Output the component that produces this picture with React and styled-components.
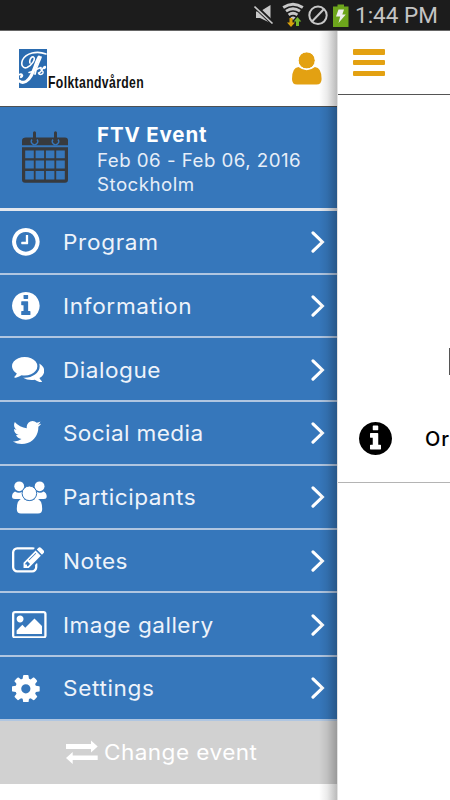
import React from 'react';
import styled, { createGlobalStyle } from 'styled-components';

const GlobalStyle = createGlobalStyle`
  * {
    box-sizing: border-box;
  }

  body {
    margin: 0;
    overflow: hidden;
    background: #fff;
    font-family: Inter, 'Liberation Sans', sans-serif;
  }
`;

const Screen = styled.div`
  display: flex;
  flex-direction: column;
  width: 450px;
  height: 800px;
  overflow: hidden;
`;

const StatusBar = styled.div`
  display: flex;
  align-items: center;
  justify-content: flex-end;
  flex: none;
  height: 31px;
  padding: 0 13px 1px 0;
  background: #1c1c1c;
  border-bottom: 1px solid #666;

  & svg {
    flex: none;
    margin-right: 5px;
  }
`;

const Clock = styled.span`
  width: 82px;
  font-family: Roboto, sans-serif;
  font-size: 22.5px;
  line-height: 28px;
  white-space: nowrap;
  color: #c4c4c4;
`;

const Body = styled.div`
  display: flex;
  flex: 1;
  min-height: 0;
`;

const Drawer = styled.aside`
  position: relative;
  display: flex;
  flex-direction: column;
  flex: none;
  width: 337px;
  background: #fff;

  &::after {
    content: '';
    position: absolute;
    top: 0;
    right: 0;
    bottom: 0;
    width: 18px;
    background: linear-gradient(to right, rgba(0, 0, 0, 0), rgba(0, 0, 0, 0.08) 45%, rgba(0, 0, 0, 0.27));
  }
`;

const DrawerHeader = styled.header`
  display: flex;
  align-items: flex-start;
  justify-content: space-between;
  flex: none;
  height: 76px;
  padding: 18px 15px 0 19px;
  border-bottom: 1px solid #4d5052;
`;

const Logo = styled.div`
  display: flex;
  align-items: flex-end;
`;

const LogoText = styled.span`
  width: 97px;
  margin: 0 0 -3px 1px;
  font-family: 'Liberation Sans', sans-serif;
  font-size: 16.5px;
  font-weight: 700;
  line-height: 17px;
  letter-spacing: 0.5px;
  white-space: nowrap;
  color: #111;
  transform: scaleX(0.74);
  transform-origin: left;
`;

const UserIcon = styled.svg`
  margin-top: 3px;
`;

const EventCard = styled.section`
  display: flex;
  flex: none;
  height: 103.75px;
  padding: 14px 0 0 22px;
  color: #fff;
  background: #3677bb;
  border-bottom: 3px solid #e3e7ee;
`;

const CalendarBox = styled.div`
  padding-top: 10px;
`;

const EventInfo = styled.div`
  margin-left: 28px;
`;

const EventTitle = styled.h1`
  margin: 0;
  font-size: 20.5px;
  font-weight: 700;
  line-height: 28px;
  letter-spacing: 0.85px;
`;

const EventLine = styled.div`
  font-size: 18px;
  line-height: 24px;
  white-space: nowrap;
  color: #e6eef8;
  letter-spacing: 0.45px;
  transform: scaleX(1.04);
  transform-origin: left;
`;

const MenuItem = styled.div`
  display: flex;
  align-items: center;
  flex: none;
  height: 63.75px;
  padding: 1px 12px 0;
  color: #fff;
  background: #3677bb;
  border-bottom: 2px solid #b0c6e1;
`;

const IconBox = styled.span`
  display: flex;
  flex: none;
  width: 50.5px;
`;

const Label = styled.span`
  font-size: 21.5px;
  line-height: 28px;
  white-space: nowrap;
  color: #eef3fa;
  letter-spacing: ${({ $spacing }) => $spacing}px;
  transform: scaleX(1.05);
  transform-origin: left;
`;

const ChevronIcon = styled.svg`
  margin-left: auto;
`;

const ChangeEvent = styled.div`
  display: flex;
  align-items: center;
  flex: none;
  height: 63px;
  padding: 0 0 0 66px;
  background: #d1d1d1;

  & ${Label} {
    margin-left: 5.5px;
    color: #fff;
  }
`;

const Content = styled.main`
  flex: none;
  width: 113px;
  overflow: hidden;
  background: #fff;
  border-left: 1px solid #e2e2e2;
`;

const ContentHeader = styled.header`
  height: 64px;
  padding: 18px 0 0 15px;
  border-bottom: 1px solid #555;
`;

const Burger = styled.div`
  display: flex;
  flex-direction: column;
  justify-content: space-between;
  width: 32px;
  height: 27px;

  & span {
    height: 5.5px;
    border-radius: 1px;
    background: #e3a112;
  }
`;

const Hero = styled.div`
  display: flex;
  justify-content: flex-end;
  height: 299px;
  padding-top: 253px;

  & span {
    width: 1px;
    height: 27px;
    background: #555;
  }
`;

const ContentRow = styled.div`
  display: flex;
  align-items: center;
  height: 89px;
  padding-left: 21px;
  border-bottom: 1px solid #b4b4b4;

  & svg {
    flex: none;
  }

  & span {
    margin: 2px 0 0 33px;
    font-size: 20px;
    font-weight: 500;
    letter-spacing: 1px;
    white-space: nowrap;
    color: #000;
  }
`;

const infoPath =
  'M1152 1376v-160q0-14-9-23t-23-9h-96v-512q0-14-9-23t-23-9h-320q-14 0-23 9t-9 23v160q0 14 9 23t23 9h96v320h-96q-14 0-23 9t-9 23v160q0 14 9 23t23 9h448q14 0 23-9t9-23zm-128-896v-160q0-14-9-23t-23-9h-192q-14 0-23 9t-9 23v160q0 14 9 23t23 9h192q14 0 23-9t9-23zm640 416q0 209-103 385.5t-279.5 279.5-385.5 103-385.5-103-279.5-279.5-103-385.5 103-385.5 279.5-279.5 385.5-103 385.5 103 279.5 279.5 103 385.5z';

const icons = {
  clock: {
    box: [128, 128, 1536, 1536],
    d: 'M1024 544v448q0 14-9 23t-23 9h-320q-14 0-23-9t-9-23v-64q0-14 9-23t23-9h224v-352q0-14 9-23t23-9h64q14 0 23 9t9 23zm416 352q0-148-73-273t-198-198-273-73-273 73-198 198-73 273 73 273 198 198 273 73 273-73 198-198 73-273zm224 0q0 209-103 385.5t-279.5 279.5-385.5 103-385.5-103-279.5-279.5-103-385.5 103-385.5 279.5-279.5 385.5-103 385.5 103 279.5 279.5 103 385.5z',
  },
  info: { box: [128, 128, 1536, 1536], d: infoPath },
  comments: {
    box: [0, 256, 1792, 1408],
    d: 'M1408 768q0 139-94 257t-256.5 186.5-353.5 68.5q-86 0-176-16-124 88-278 128-36 9-86 16h-3q-11 0-20.5-8t-11.5-21q-1-3-1-6.5t.5-6.5 2-6l2.5-5 3.5-5.5 4-5 4.5-5 4-4.5q5-6 23-25t26-29.5 22.5-29 25-38.5 20.5-44q-124-72-195-177t-71-224q0-139 94-257t256.5-186.5 353.5-68.5 353.5 68.5 256.5 186.5 94 257zm384 256q0 120-71 224.5t-195 176.5q10 24 20.5 44t25 38.5 22.5 29 26 29.5 23 25q1 1 4 4.5t4.5 5 4 5 3.5 5.5l2.5 5 2 6 .5 6.5-1 6.5q-3 14-13 22t-22 7q-50-7-86-16-154-40-278-128-90 16-176 16-271 0-472-132 58 4 88 4 161 0 309-45t264-129q125-92 192-212t67-254q0-77-23-152 129 71 204 178t75 230z',
  },
  twitter: {
    box: [60, 256, 1624, 1320],
    d: 'M1684 408q-67 98-162 167 1 14 1 42 0 130-38 259.5t-115.5 248.5-184.5 210.5-258 146-323 54.5q-271 0-496-145 35 4 78 4 225 0 401-138-105-2-188-64.5t-114-159.5q33 5 61 5 43 0 85-11-112-23-185.5-111.5t-73.5-205.5v-4q68 38 146 41-66-44-105-115t-39-154q0-88 44-163 121 149 294.5 238.5t371.5 99.5q-8-38-8-74 0-134 94.5-228.5t228.5-94.5q140 0 236 102 109-21 205-78-37 115-142 178 93-10 186-50z',
  },
  edit: {
    box: [0, 120, 1792, 1560],
    d: 'M888 1184l116-116-152-152-116 116v56h96v96h56zm440-720q-16-16-33 1l-350 350q-17 17-1 33t33-1l350-350q17-17 1-33zm80 594v190q0 119-84.5 203.5t-203.5 84.5h-832q-119 0-203.5-84.5t-84.5-203.5v-832q0-119 84.5-203.5t203.5-84.5h832q63 0 117 25 15 7 18 23 3 17-9 29l-49 49q-14 14-32 8-23-6-45-6h-832q-66 0-113 47t-47 113v832q0 66 47 113t113 47h832q66 0 113-47t47-113v-126q0-13 9-22l64-64q15-15 35-7t20 29zm-96-738l288 288-672 672h-288v-288zm444 132l-92 92-288-288 92-92q28-28 68-28t68 28l152 152q28 28 28 68t-28 68z',
  },
  image: {
    box: [-64, 128, 1920, 1536],
    d: 'M576 576q0 80-56 136t-136 56-136-56-56-136 56-136 136-56 136 56 56 136zm1024 384v448h-1408v-192l320-320 160 160 512-512zm96-704h-1600q-13 0-22.5 9.5t-9.5 22.5v1216q0 13 9.5 22.5t22.5 9.5h1600q13 0 22.5-9.5t9.5-22.5v-1216q0-13-9.5-22.5t-22.5-9.5zm160 32v1216q0 66-47 113t-113 47h-1600q-66 0-113-47t-47-113v-1216q0-66 47-113t113-47h1600q66 0 113 47t47 113z',
  },
  cog: {
    box: [128, 128, 1536, 1536],
    d: 'M1152 896q0-106-75-181t-181-75-181 75-75 181 75 181 181 75 181-75 75-181zm512-109v222q0 12-8 23t-20 13l-185 28q-19 54-39 91 35 50 107 138 10 12 10 25t-9 23q-27 37-99 108t-94 71q-12 0-26-9l-138-108q-44 23-91 38-16 136-29 186-7 28-36 28h-222q-14 0-24.5-8.5t-11.5-21.5l-28-184q-49-16-90-37l-141 107q-10 9-25 9-14 0-25-11-126-114-165-168-7-10-7-23 0-12 8-23 15-21 51-66.5t54-70.5q-27-50-41-99l-183-27q-13-2-21-12.5t-8-23.5v-222q0-12 8-23t19-13l186-28q14-46 39-92-40-57-107-138-10-12-10-24 0-10 9-23 26-36 98.5-107.5t94.5-71.5q13 0 26 10l138 107q44-23 91-38 16-136 29-186 7-28 36-28h222q14 0 24.5 8.5t11.5 21.5l28 184q49 16 90 37l142-107q9-9 24-9 13 0 25 10 129 119 165 170 7 8 7 22 0 12-8 23-15 21-51 66.5t-54 70.5q26 50 41 98l183 28q13 2 21 12.5t8 23.5z',
  },
};

const items = [
  { icon: 'clock', label: 'Program', spacing: 0.65 },
  { icon: 'info', label: 'Information', spacing: 0.65 },
  { icon: 'comments', label: 'Dialogue', spacing: 0.5 },
  { icon: 'twitter', label: 'Social media', spacing: 0.37 },
  { icon: 'people', label: 'Participants', spacing: 0.55 },
  { icon: 'edit', label: 'Notes', spacing: 0.4 },
  { icon: 'image', label: 'Image gallery', spacing: 0.48 },
  { icon: 'cog', label: 'Settings', spacing: 0.62 },
];

function Glyph({ name, unit = 55.5 }) {
  const { box, d } = icons[name];
  return (
    <svg width={box[2] / unit} height={box[3] / unit} viewBox={box.join(' ')} fill="currentColor">
      <path d={d} />
    </svg>
  );
}

function People() {
  return (
    <svg width="35" height="33" viewBox="0 0 35 33" fill="#fff">
      <circle cx="7.2" cy="5.3" r="4.9" />
      <circle cx="27.6" cy="5.3" r="4.9" />
      <path d="M3 10.5Q7 13 10.5 10.5L12 18H3Q0 18 0 15.5Q0 12 3 10.5Z" />
      <path d="M31.7 10.5Q28 13 24.3 10.5L23 18H31.7Q34.7 18 34.7 15.5Q34.7 12 31.7 10.5Z" />
      <path
        d="M10.5 17.2Q17.4 23 24.3 17.2Q30.2 18.5 30.2 28Q30.2 32.5 26 32.5H9Q4.8 32.5 4.8 28Q4.8 18.5 10.5 17.2Z"
      />
      <circle cx="17.4" cy="12.3" r="7.3" stroke="#3677bb" strokeWidth="1" />
    </svg>
  );
}

function Chevron() {
  return (
    <ChevronIcon width="14" height="22" viewBox="0 0 14 22" fill="none" stroke="#fff" strokeWidth="3.1">
      <path d="M2 1.8L11.4 11L2 20.2" strokeLinecap="round" />
    </ChevronIcon>
  );
}

function Calendar() {
  return (
    <svg width="47" height="53" viewBox="0 0 47 53" fill="#373a3e">
      <path d="M4 6.5H43Q46 6.5 46 9.5V14.3H0V9.5Q0 6.5 4 6.5Z" />
      <g fill="none" stroke="#3677bb" strokeWidth="1.3">
        <path d="M10 8.5A3.2 3.2 0 1 0 15 8.5M31 8.5A3.2 3.2 0 1 0 36 8.5" />
      </g>
      <path d="M11 1.8Q11 .3 12.5 .3T14 1.8V10H11ZM32 1.8Q32 .3 33.5 .3T35 1.8V10H32Z" />
      <path
        fillRule="evenodd"
        d="M0 16.3H46V48.5Q46 51.8 43 51.8H3Q0 51.8 0 48.5ZM3.2 19.5V27.3H11.8V19.5ZM13.6 19.5V27.3H22.1V19.5ZM23.9 19.5V27.3H32.4V19.5ZM34.2 19.5V27.3H42.8V19.5ZM3.2 29.6V37.6H11.8V29.6ZM13.6 29.6V37.6H22.1V29.6ZM23.9 29.6V37.6H32.4V29.6ZM34.2 29.6V37.6H42.8V29.6ZM3.2 40V48.6H11.8V40ZM13.6 40V48.6H22.1V40ZM23.9 40V48.6H32.4V40ZM34.2 40V48.6H42.8V40Z"
      />
    </svg>
  );
}

function LogoMark() {
  return (
    <svg width="28" height="39" viewBox="0 0 28 39" fill="none" stroke="#fff" strokeLinecap="round">
      <path d="M0 0H28V39H0Z" fill="#2b6cb0" stroke="none" />
      <path d="M27 5C18 1.5 7 4 3.5 11C1.5 16 4 20 8 18.5C13 16 17 10 14.5 8C12.5 7 10 11 11 14" strokeWidth="1.6" />
      <path d="M20 8C15 17 14 29 7 32.5C4 34 1.5 33 0.5 32" strokeWidth="3" />
      <path d="M1 25.5C3 25 4 27 2 28" strokeWidth="2.2" />
      <path d="M10 23.5C14 23 17 20 22 18.5M20 24C23 23 24 17 26 17.5C27 18 26 19.5 25 19.5M22 19C21 22 25 21 24 24C23 26 20 26 19.5 24" strokeWidth="1.5" />
      <path d="M22 8C20 14 17 18 16 25" strokeWidth="1.8" />
    </svg>
  );
}

function StatusIcons() {
  return (
    <svg width="96" height="26" viewBox="0 0 96 26" fill="#c8c8c8">
      {/* muted speaker */}
      <path d="M2 9.5H6L16.5 3V21L6 16H2Z" />
      <path d="M1 4L19 21.5" stroke="#1c1c1c" strokeWidth="4.5" />
      <path d="M0.5 4.5L18.5 21.5" stroke="#c8c8c8" strokeWidth="1.7" />
      {/* wifi with traffic arrows */}
      <g fill="none" stroke="#c8c8c8" strokeWidth="2.8">
        <path d="M29.2 5.5Q39 -1 48.8 5.5" />
        <path d="M32 9.2Q39 4.4 46 9.2" />
        <path d="M34.6 12.8Q39 9.8 43.4 12.8" />
      </g>
      <path d="M36.5 15.4Q39 13.6 41.5 15.4L39 18Z" />
      <path d="M35.5 16H38.5V20.5H41L37 25L33 20.5H35.5Z" fill="#d9a10b" />
      <path d="M42 24H45V19.5H47.3L43.5 15L39.7 19.5H42Z" fill="#76b82a" />
      {/* blocked */}
      <circle cx="64" cy="13.3" r="8.7" fill="none" stroke="#c8c8c8" strokeWidth="2" />
      <path d="M58 19.5L70 7" stroke="#c8c8c8" strokeWidth="2" />
      {/* charging battery */}
      <path d="M79 4.5H83.5V2.5H90V4.5H94.5V25H79Z" fill="#6da51c" />
      <path d="M84.5 7.5H90L88.3 12.5H91.8L84.5 21L86.2 14.5H82Z" fill="#eee" />
    </svg>
  );
}

export default function App() {
  return (
    <Screen>
      <GlobalStyle />
      <StatusBar>
        <StatusIcons />
        <Clock>1:44 PM</Clock>
      </StatusBar>
      <Body>
        <Drawer>
          <DrawerHeader>
            <Logo>
              <LogoMark />
              <LogoText>Folktandvården</LogoText>
            </Logo>
            <UserIcon width="30" height="33" viewBox="0 0 30 33" fill="#e3a112">
              <circle cx="14.7" cy="8.4" r="8.2" />
              <path d="M6.5 15Q14.7 21.5 22.9 15Q29.6 15.5 29.6 27Q29.6 32.6 24.5 32.6H5Q0 32.6 0 27Q0 15.5 6.5 15Z" />
              <circle cx="14.7" cy="8.4" r="8.7" fill="none" stroke="#fff" strokeWidth="1" />
            </UserIcon>
          </DrawerHeader>
          <EventCard>
            <CalendarBox>
              <Calendar />
            </CalendarBox>
            <EventInfo>
              <EventTitle>FTV Event</EventTitle>
              <EventLine>Feb 06 - Feb 06, 2016</EventLine>
              <EventLine>Stockholm</EventLine>
            </EventInfo>
          </EventCard>
          {items.map(({ icon, label, spacing }) => (
            <MenuItem key={label}>
              <IconBox>{icon === 'people' ? <People /> : <Glyph name={icon} />}</IconBox>
              <Label $spacing={spacing}>{label}</Label>
              <Chevron />
            </MenuItem>
          ))}
          <ChangeEvent>
            <svg width="32" height="24" viewBox="0 0 32 24" fill="#fff">
              <path d="M0 4H25V0.5L31.7 6.5L25 12.5V9H0Z" />
              <path d="M31.7 15.5H6.7V12L0 18L6.7 24V20H31.7Z" />
            </svg>
            <Label $spacing={0.42}>Change event</Label>
          </ChangeEvent>
        </Drawer>
        <Content>
          <ContentHeader>
            <Burger>
              <span />
              <span />
              <span />
            </Burger>
          </ContentHeader>
          <Hero>
            <span />
          </Hero>
          <ContentRow>
            <svg width="33" height="33" viewBox="128 128 1536 1536">
              <path d={infoPath} />
            </svg>
            <span>Or</span>
          </ContentRow>
        </Content>
      </Body>
    </Screen>
  );
}
